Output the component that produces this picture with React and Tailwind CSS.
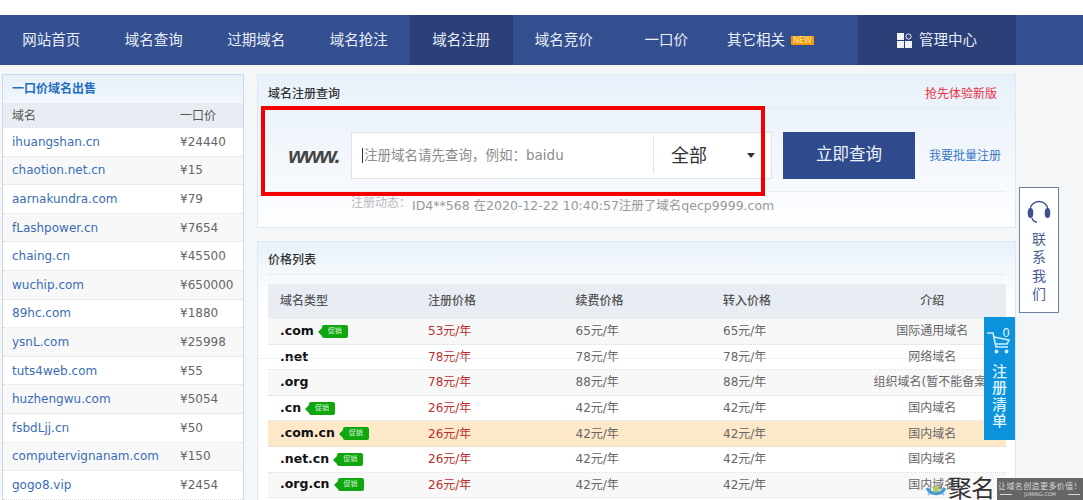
import React from "react";

const CJK = "font-['DejaVu_Sans','Noto_Sans_CJK_SC',sans-serif]";

const navItems = ["网站首页", "域名查询", "过期域名", "域名抢注", "域名注册", "域名竞价", "一口价"];

const sales = [
  ["ihuangshan.cn", "¥24440"],
  ["chaotion.net.cn", "¥15"],
  ["aarnakundra.com", "¥79"],
  ["fLashpower.cn", "¥7654"],
  ["chaing.cn", "¥45500"],
  ["wuchip.com", "¥650000"],
  ["89hc.com", "¥1880"],
  ["ysnL.com", "¥25998"],
  ["tuts4web.com", "¥55"],
  ["huzhengwu.com", "¥5054"],
  ["fsbdLjj.cn", "¥50"],
  ["computervignanam.com", "¥150"],
  ["gogo8.vip", "¥2454"],
];

const prices = [
  { name: ".com", promo: true, reg: "53元/年", renew: "65元/年", move: "65元/年", intro: "国际通用域名" },
  { name: ".net", reg: "78元/年", renew: "78元/年", move: "78元/年", intro: "网络域名" },
  { name: ".org", reg: "78元/年", renew: "88元/年", move: "88元/年", intro: "组织域名(暂不能备案)" },
  { name: ".cn", promo: true, reg: "26元/年", renew: "42元/年", move: "42元/年", intro: "国内域名" },
  { name: ".com.cn", promo: true, reg: "26元/年", renew: "42元/年", move: "42元/年", intro: "国内域名" },
  { name: ".net.cn", promo: true, reg: "26元/年", renew: "42元/年", move: "42元/年", intro: "国内域名" },
  { name: ".org.cn", promo: true, reg: "26元/年", renew: "42元/年", move: "42元/年", intro: "国内域名" },
];

const PromoTag = () => (
  <span className="relative ml-[8px] flex h-[13px] w-[26px] items-center justify-center rounded-[2px] bg-[#0fa60f] text-[7px] leading-none font-normal text-[#d8f5d8]">
    <span className="absolute left-[-4px] top-[3px] h-0 w-0 border-y-[4px] border-r-[4px] border-y-transparent border-r-[#0fa60f]" />
    促销
  </span>
);

export default function App() {
  return (
    <div className={`relative h-[500px] w-[1083px] overflow-hidden bg-[#f5f6f7] ${CJK}`}>
      <div className="h-[15px] bg-white" />

      {/* Nav */}
      <div className="flex h-[50px] items-stretch bg-[#344f8f] text-[14.5px] text-[#e9edf6]">
        {navItems.map((item) => (
          <div
            key={item}
            className={`flex w-[102.5px] items-center justify-center pt-[1px] ${item === "域名注册" ? "bg-[#2b4079]" : ""}`}
          >
            {item}
          </div>
        ))}
        <div className="flex w-[140.5px] items-center pl-[9.5px] pt-[1px]">
          其它相关
          <span className="ml-[6px] flex h-[9px] w-[23px] items-center justify-center rounded-[1px] bg-[#f39a0c] text-[8px] leading-none text-[#ffe9a8]">
            NEW
          </span>
        </div>
        <div className="flex w-[158px] items-center justify-center gap-[7px] bg-[#2b4079] pt-[1px]">
          <svg width="15" height="15" viewBox="0 0 15 15" fill="#f1f3f8">
            <rect x="0" y="0" width="7" height="7" />
            <rect x="0" y="8" width="7" height="7" />
            <rect x="8" y="8" width="7" height="7" />
            <circle cx="11.5" cy="3.5" r="2.6" fill="none" stroke="#f1f3f8" strokeWidth="1" />
          </svg>
          管理中心
        </div>
      </div>

      <div className="mt-[9px] flex items-start pl-[2px]">
        {/* One-price list */}
        <div className="h-[500px] w-[242px] shrink-0 border border-[#c9d8ea] bg-white">
          <div className="flex h-[28px] items-center bg-gradient-to-b from-[#e6f0fa] to-[#f3f7fc] pl-[9px] text-[12px] font-bold text-[#1f6fc0]">
            一口价域名出售
          </div>
          <div className="flex h-[25px] items-center bg-[#e8ecf3] text-[12px] text-[#555]">
            <span className="w-[177px] pl-[9px]">域名</span>
            <span>一口价</span>
          </div>
          {sales.map(([domain, price], i) => (
            <div
              key={domain}
              className={`flex h-[28.6px] items-center border-b border-dotted border-[#dddddd] ${i % 2 ? "bg-[#f8f8f8]" : "bg-white"}`}
            >
              <span className="w-[177px] pl-[9px] text-[12px] text-[#3a6db5]">{domain}</span>
              <span className="text-[12px] text-[#666]">{price}</span>
            </div>
          ))}
        </div>

        <div className="ml-[13px] w-[759px] shrink-0">
          {/* Search panel */}
          <div className="relative h-[154px] border border-[#dce8f3] bg-gradient-to-b from-[#e8f1fa] via-[#f6f9fd] via-70% to-white px-[10px]">
            <div className="flex h-[34px] items-center justify-between border-b border-[#e3ebf3] pt-[4px] pr-[8px] text-[12px] text-[#333]">
              <span className="font-medium">域名注册查询</span>
              <span className="text-[#e8313f]">抢先体验新版</span>
            </div>
            <div className="mt-[23px] flex h-[47px] items-stretch">
              <div className="flex w-[73px] items-center justify-end pr-[2px] font-['Liberation_Sans',sans-serif] text-[22px] leading-none font-bold tracking-[-1.5px] text-[#444] italic">
                www.
              </div>
              <div className="ml-[10px] flex w-[421px] items-center border border-[#e2e2e2] bg-white">
                <div className="flex w-[301px] items-center pl-[10px] text-[13.5px] text-[#8c8c8c]">
                  <span className="mr-[1px] h-[15px] w-px bg-[#333]" />
                  {"注册域名请先查询\uFF0C例如\uFF1Abaidu"}
                </div>
                <div className="flex h-[37px] flex-1 items-center border-l border-[#e2e2e2] pl-[17px] text-[18px] text-[#333]">
                  全部
                  <span className="ml-[40px] h-0 w-0 border-x-[4px] border-t-[5px] border-x-transparent border-t-[#333]" />
                </div>
              </div>
              <div className="ml-[11px] flex w-[132px] items-center justify-center bg-[#2f4b8d] text-[16.5px] text-[#f0f3fa]">
                立即查询
              </div>
              <div className="ml-[14px] flex items-center text-[12px] text-[#3a78c8]">我要批量注册</div>
            </div>
            <div className="mt-[12px] flex border-t border-[#e8eef5] pl-[83px] pt-[2px] text-[12.5px] leading-[18px]">
              <span className="w-[61px] text-[12px] text-[#bbbbbb]">{"注册动态\uFF1A"}</span>
              <span className="pt-[3px] text-[#999]">ID4**568 在2020-12-22 10:40:57注册了域名qecp9999.com</span>
            </div>
          </div>

          {/* Price table panel */}
          <div className="mt-[13px] h-[400px] border border-[#dce8f3] bg-gradient-to-b from-[#e8f1fa] to-white to-15% px-[10px]">
            <div className="flex h-[33px] items-center border-b border-[#e3ebf3] pt-[3px] text-[12px] font-medium text-[#333]">
              价格列表
            </div>
            <div className="mt-[9px] w-[738px] text-[12px] text-[#666]">
              <div className="grid h-[35px] grid-cols-[148px_147.5px_147.5px_147.5px_147.5px] items-center bg-[#e8ecf3] pb-[2px] font-medium text-[#555]">
                <span className="pl-3">域名类型</span>
                <span className="pl-3">注册价格</span>
                <span className="pl-3">续费价格</span>
                <span className="pl-3">转入价格</span>
                <span className="text-center">介绍</span>
              </div>
              {prices.map((row, i) => (
                <div
                  key={row.name}
                  className={`grid h-[25.6px] grid-cols-[148px_147.5px_147.5px_147.5px_147.5px] items-center border-b border-dotted border-[#dddddd] ${
                    row.name === ".com.cn" ? "bg-[#fde9c9]" : i % 2 ? "bg-white" : "bg-[#f8f8f8]"
                  }`}
                >
                  <span className="flex items-center pl-3 text-[12.5px] font-bold text-[#111]">
                    {row.name}
                    {row.promo && <PromoTag />}
                  </span>
                  <span className="pl-3 text-[#b8312f]">{row.reg}</span>
                  <span className="pl-3">{row.renew}</span>
                  <span className="pl-3">{row.move}</span>
                  <span className="overflow-hidden text-center whitespace-nowrap">{row.intro}</span>
                </div>
              ))}
            </div>
          </div>
        </div>
      </div>

      {/* Faint seam across the table */}
      <div className="absolute left-[257px] top-[358px] h-px w-[749px] bg-[#dfe8f4]/50" />

      {/* Red annotation */}
      <div className="absolute left-[261px] top-[106px] h-[90px] w-[504px] border-4 border-[#f40000]" />

      {/* Contact box */}
      <div className="absolute left-[1019px] top-[187px] flex h-[126px] w-[40px] flex-col items-center border border-[#6f7ea5] bg-white pt-[12px] text-[14px] leading-[18.4px] text-[#4a5d8f]">
        <svg width="24" height="24" viewBox="0 0 24 24" fill="none">
          <path d="M3 13 V10 a9 8.5 0 0 1 18 0 V13" stroke="#3b5190" strokeWidth="1.4" />
          <ellipse cx="3.5" cy="13" rx="2.8" ry="5" fill="#3b5190" />
          <ellipse cx="20.5" cy="13" rx="2.8" ry="5" fill="#3b5190" />
          <path d="M5 18 Q6 22 10 22" stroke="#3b5190" strokeWidth="1.3" />
        </svg>
        <div className="mt-[6px] flex flex-col items-center">
          <span>联</span>
          <span>系</span>
          <span>我</span>
          <span>们</span>
        </div>
      </div>

      {/* Cart box */}
      <div className="absolute left-[984px] top-[317px] flex h-[123px] w-[31px] flex-col items-center bg-[#0d93dc] text-[#dff3ff]">
        <div className="relative h-[37px] w-full">
          <span className="absolute right-[5px] top-[10px] text-[12px] leading-none">0</span>
          <svg className="absolute left-[2px] top-[14px]" width="25" height="24" viewBox="0 0 25 24" fill="none" stroke="#cfeeff" strokeWidth="1.6">
            <path d="M1 2 H7 L10 16 H22" />
            <path d="M8 6 L23 9 L21 13 H9.5" />
            <circle cx="10.5" cy="20.5" r="1.2" fill="#cfeeff" />
            <circle cx="20.5" cy="20.5" r="1.2" fill="#cfeeff" />
          </svg>
        </div>
        <div className="mt-[10px] flex flex-col items-center text-[15px] leading-[16.3px] font-medium">
          <span>注</span>
          <span>册</span>
          <span>清</span>
          <span>单</span>
        </div>
      </div>

      {/* Watermark */}
      <div className="absolute bottom-0 right-0 flex h-[22px] items-center">
        <svg width="24" height="22" viewBox="0 0 24 22" fill="none">
          <path d="M4 3 A11 11 0 0 0 20 3" stroke="#8dc8ea" strokeWidth="2" transform="rotate(180 12 10)" />
          <path d="M3 10 A10 10 0 0 0 21 10" stroke="#4a9bd0" strokeWidth="3" />
          <circle cx="12" cy="11" r="3" fill="#a8cf5a" />
        </svg>
        <span className="w-[48px] text-[24px] leading-none tracking-[-1px] whitespace-nowrap text-[#333]">聚名</span>
        <div className="ml-[1px] flex h-[22px] w-[86px] flex-col items-center justify-center bg-[#666] text-[#d8d8d8]">
          <span className="font-['Noto_Sans_CJK_SC',sans-serif] text-[8px] leading-[11px] tracking-[0.4px] whitespace-nowrap">{"让域名创造更多价值\uFF01"}</span>
          <span className="flex w-full items-center justify-between px-[3px] text-[5px] leading-[7px] whitespace-nowrap">
            <span className="h-px w-[12px] bg-[#d8d8d8]" />
            JUMING.COM
            <span className="h-px w-[12px] bg-[#d8d8d8]" />
          </span>
        </div>
      </div>
    </div>
  );
}
